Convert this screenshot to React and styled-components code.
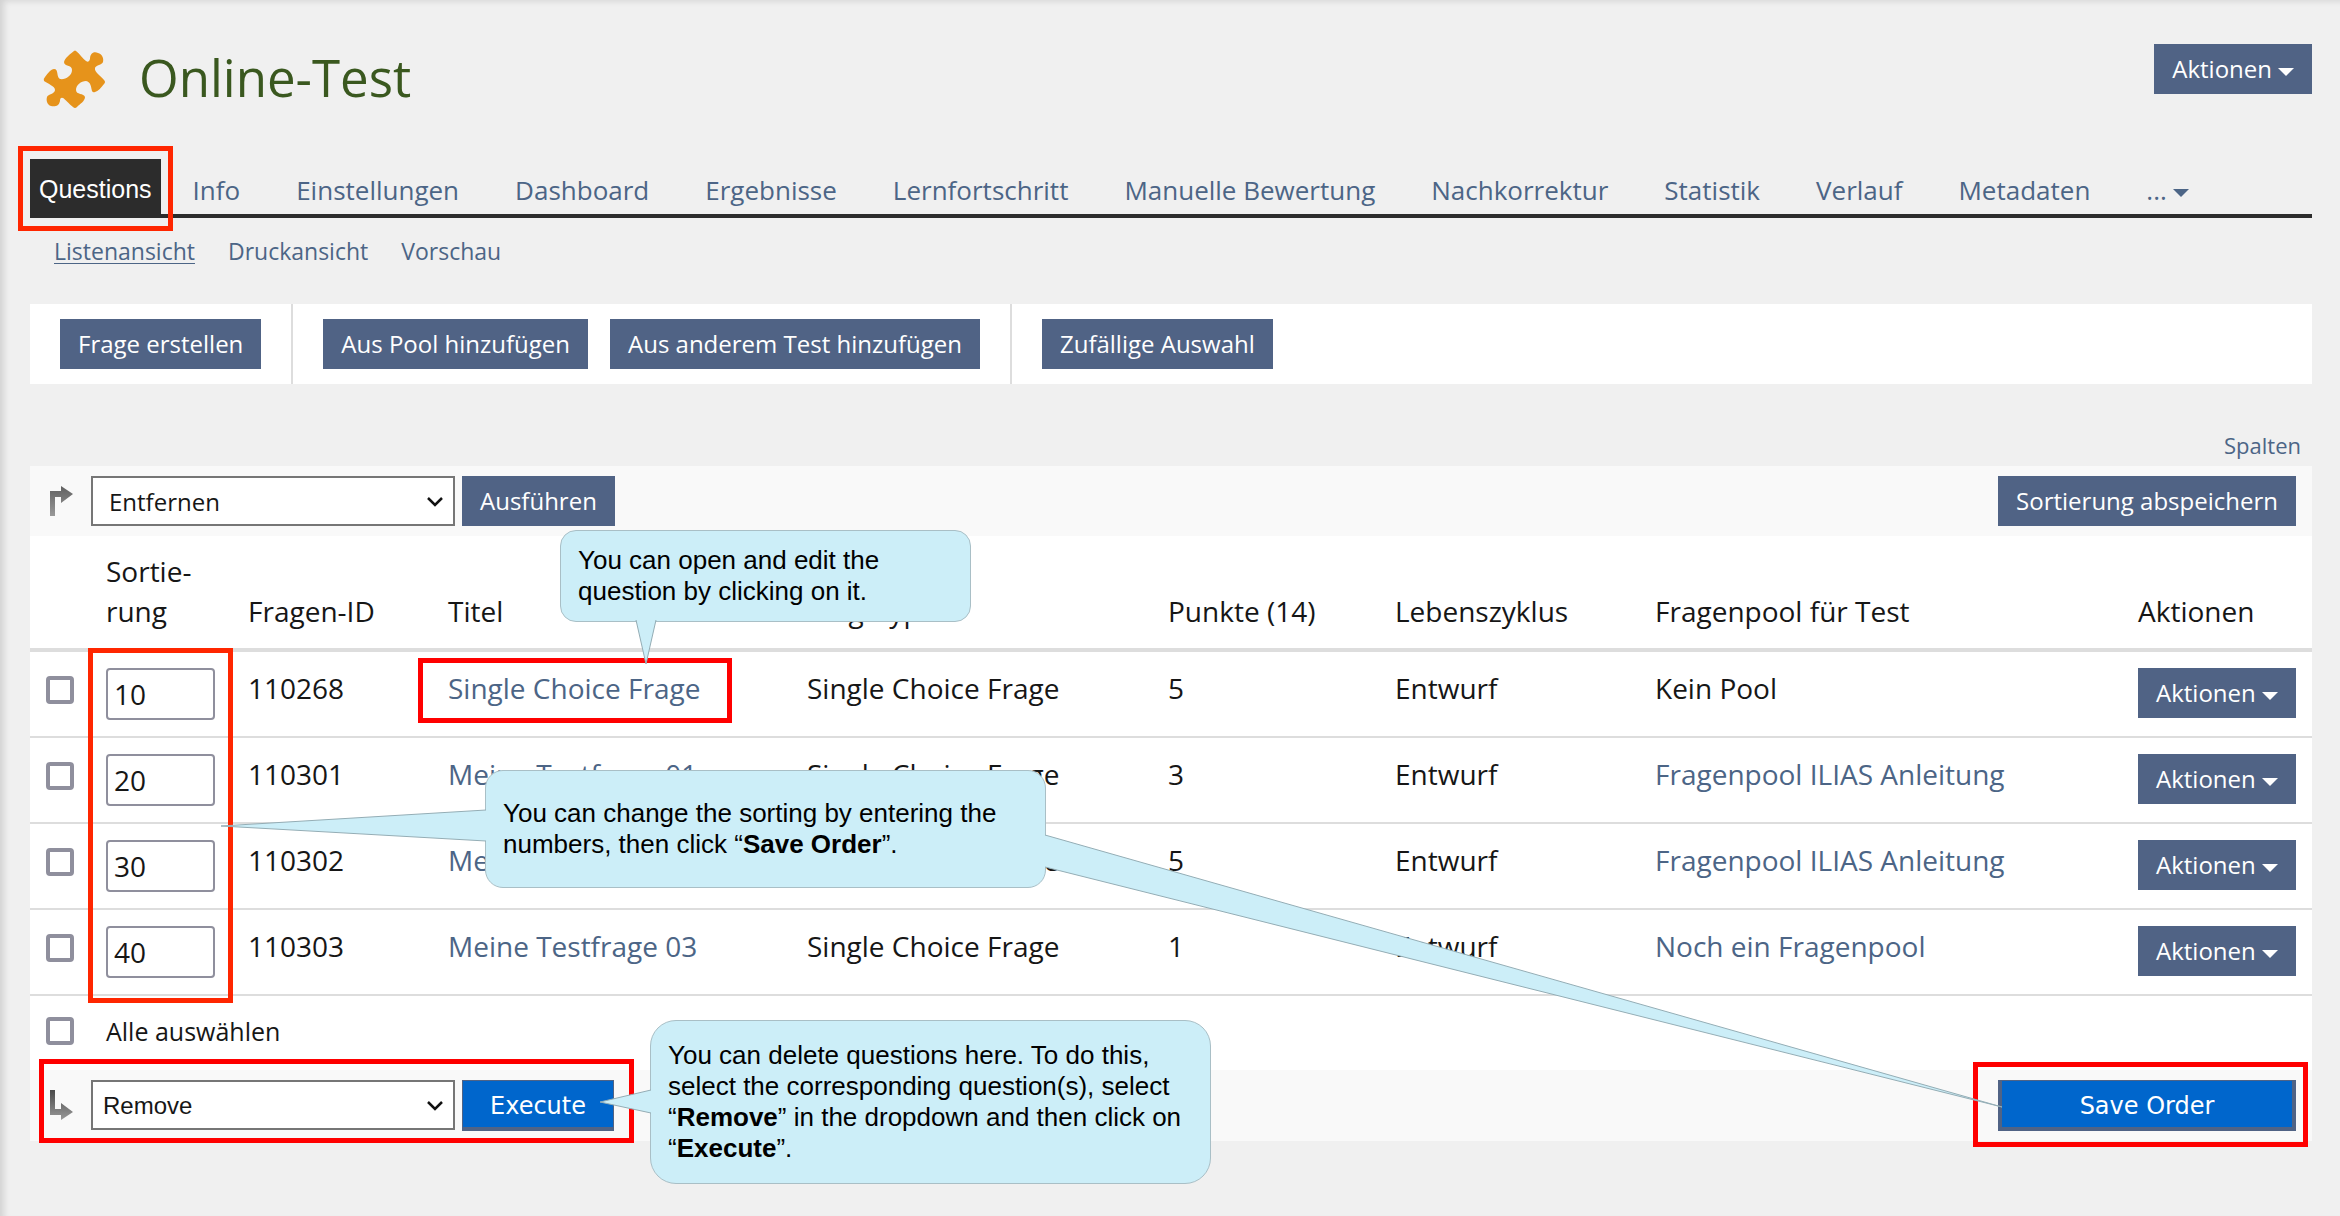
import React, { useState } from 'react';
import styled, { createGlobalStyle } from 'styled-components';

const GlobalStyle = createGlobalStyle`
    body {
        margin: 0;
        background: #f0f0f0;
        color: #161616;
        font-family: "Open Sans", sans-serif;
    }

    *, *::before, *::after {
        box-sizing: border-box;
    }
`;

const Page = styled.div`
    position: relative;
    min-height: 100vh;
    padding: 44px 28px 75px 30px;
    overflow: hidden;
    box-shadow: inset 6px 3px 6px -2px rgba(0, 0, 0, 0.12);
`;

const Header = styled.header`
    display: flex;
    align-items: flex-start;
    justify-content: space-between;
`;

const TitleGroup = styled.div`
    display: flex;
    align-items: center;
    gap: 32px;
    height: 72px;
    padding-left: 13px;
`;

const Title = styled.h1`
    margin: 0;
    padding-bottom: 6px;
    color: #3a581f;
    font-size: 51px;
    font-weight: 400;
    line-height: 66px;
`;

const Button = styled.button`
    display: inline-flex;
    align-items: center;
    gap: 6px;
    height: 50px;
    padding: 0 18px;
    border: 0;
    background: #506385;
    color: #fff;
    font-family: inherit;
    font-size: 24px;
    line-height: 36px;
    white-space: nowrap;
`;

const PrimaryButton = styled.button`
    width: ${({ $wide }) => ($wide ? '298px' : '152px')};
    height: 51px;
    padding: 3px 0 0;
    border: solid #506385;
    border-width: ${({ $wide }) => ($wide ? '1px 4px 4px' : '1px 1px 4px')};
    background: #0066cc;
    color: #fff;
    font-family: "DejaVu Sans", sans-serif;
    font-size: 24px;
`;

const Caret = styled.span`
    width: 0;
    height: 0;
    margin-top: 5px;
    border: 8px solid transparent;
    border-top: 8px solid currentColor;
    border-bottom: 0;
`;

const Tabs = styled.nav`
    display: flex;
    align-items: flex-end;
    margin-top: 43px;
    border-bottom: 4px solid #2c2c2c;
`;

const Tab = styled.a`
    display: flex;
    align-items: center;
    gap: 6px;
    margin-right: 56px;
    padding: 8px 0;
    color: #4c6586;
    font-size: 26px;
    line-height: 32px;
    text-decoration: none;
    white-space: nowrap;
`;

const ActiveTab = styled.a`
    position: relative;
    margin-right: 32px;
    padding: 14px 9px 9px;
    background: #2c2c2c;
    color: #fff;
    font-family: "Liberation Sans", Arial, sans-serif;
    font-size: 25px;
    line-height: 32px;
    text-decoration: none;
`;

const SubTabs = styled.nav`
    display: flex;
    gap: 33px;
    padding: 16px 24px 36px;
`;

const SubTab = styled.a`
    color: #4c6586;
    font-size: 23px;
    line-height: 34px;
    text-decoration: ${({ $active }) => ($active ? 'underline' : 'none')};
    text-decoration-thickness: 1px;
    text-underline-offset: 3px;
`;

const Toolbar = styled.div`
    display: flex;
    height: 80px;
    background: #fff;
`;

const ToolbarGroup = styled.div`
    display: flex;
    align-items: center;
    gap: 22px;
    padding: 0 30px;

    & + & {
        border-left: 2px solid #ddd;
    }
`;

const ColumnPicker = styled.div`
    display: flex;
    justify-content: flex-end;
    padding: 45px 11px 5px;

    a {
        color: #4c6586;
        font-size: 22px;
        line-height: 32px;
        text-decoration: none;
    }
`;

const CommandBar = styled.div`
    display: flex;
    align-items: flex-start;
    justify-content: space-between;
    padding: 10px 16px 10px 19px;
    background: #f9f9f9;
`;

const CommandGroup = styled.div`
    position: relative;
    display: flex;
    align-items: flex-start;
    gap: 7px;
`;

const ArrowBox = styled.div`
    width: 35px;
    padding-top: 10px;
`;

const SelectBox = styled.div`
    position: relative;
    display: flex;

    svg {
        position: absolute;
        top: 20px;
        right: 11px;
    }
`;

const Select = styled.select`
    width: 364px;
    height: 50px;
    padding: 0 ${({ $plain }) => ($plain ? '10px' : '16px')};
    appearance: none;
    border: 2px solid #767676;
    border-radius: 0;
    background: #fff;
    color: #161616;
    font-family: ${({ $plain }) => ($plain ? '"Liberation Sans", Arial, sans-serif' : 'inherit')};
    font-size: 24px;
`;

const Table = styled.table`
    width: 100%;
    table-layout: fixed;
    border-collapse: collapse;
    background: #fff;
    font-size: 28px;
    line-height: 40px;

    th, td {
        padding: 16px 15px;
        text-align: left;
        vertical-align: top;
        font-weight: 400;
        white-space: nowrap;
    }

    th {
        padding: 14px 15px 17px;
        vertical-align: bottom;
    }

    td {
        height: 86px;
    }

    thead tr {
        height: 114px;
        border-bottom: 4px solid #ddd;
    }

    tbody tr {
        border-bottom: 2px solid #ddd;
    }

    a {
        color: #4c6586;
        text-decoration: none;
    }
`;

const Checkbox = styled.input`
    display: block;
    width: 28px;
    height: 28px;
    margin: ${({ $row }) => ($row ? '8px 0 0 1px' : '0')};
    appearance: none;
    border: 4px solid #8f8f9d;
    border-radius: 4px;
    background: #fff;

    &:checked {
        background: #506385;
    }
`;

const OrderInput = styled.input`
    display: block;
    width: 109px;
    height: 52px;
    padding: 0 6px;
    border: 2px solid #8f8f9d;
    border-radius: 4px;
    color: #161616;
    font-family: inherit;
    font-size: 28px;
`;

const TitleLink = styled.a`
    position: relative;
`;

const SelectAll = styled.div`
    display: flex;
    align-items: center;
    gap: 32px;
    height: 74px;
    padding: 0 16px 4px;
    background: #fff;
    font-size: 25px;
`;

const TableArea = styled.div`
    position: relative;
`;

// red marker frame around the part a hint talks about
const Marker = styled.span`
    position: absolute;
    z-index: 1;
    inset: ${({ $inset }) => $inset};
    border: 5px solid ${({ $color }) => $color || '#ff0000'};
    pointer-events: none;
`;

const OrderMarker = styled(Marker)`
    left: 58px;
    width: 145px;
`;

const Pointers = styled.svg`
    position: absolute;
    z-index: 3;
    top: 0;
    left: 0;
    pointer-events: none;
`;

const Callout = styled.div`
    position: absolute;
    z-index: 2;
    top: ${({ $top }) => $top}px;
    left: ${({ $left }) => $left}px;
    width: ${({ $width }) => $width}px;
    padding: ${({ $padding }) => $padding};
    border: 1px solid #a9bfc6;
    border-radius: ${({ $radius }) => $radius}px;
    background: #cceef8;
    color: #000;
    font-family: "Liberation Sans", Arial, sans-serif;
    font-size: 26px;
    line-height: 31px;
    white-space: nowrap;
`;

const tabs = [
    'Info', 'Einstellungen', 'Dashboard', 'Ergebnisse', 'Lernfortschritt',
    'Manuelle Bewertung', 'Nachkorrektur', 'Statistik', 'Verlauf', 'Metadaten',
];

const columnWidths = [61, 142, 200, 359, 361, 227, 260, null, 189];

const initialQuestions = [
    { order: '10', id: 110268, title: 'Single Choice Frage', points: 5, pool: null },
    { order: '20', id: 110301, title: 'Meine Testfrage 01', points: 3, pool: 'Fragenpool ILIAS Anleitung' },
    { order: '30', id: 110302, title: 'Meine Testfrage 02', points: 5, pool: 'Fragenpool ILIAS Anleitung' },
    { order: '40', id: 110303, title: 'Meine Testfrage 03', points: 1, pool: 'Noch ein Fragenpool' },
];

const PuzzleIcon = () => (
    <svg width="64" height="60" viewBox="0 0 64 60" aria-hidden="true">
        <path
            fill="#e6931b"
            d="M31 1 Q32 0 33 1 C37 4 40 9 43 11 Q46 13 47 9 C47 3 51 1 55 3 C59 4 61 8 60 12 C59 15 53 15 52 18 C51 22 58 26 61 30 Q63 32 61 34 C58 38 55 41 52 42 Q50 43 49 41 C48 37 48 32 43 31 C38 31 33 35 33 40 C33 45 41 43 42 47 C42 51 37 54 34 57 Q32 59 30 57 C26 54 22 49 20 48 Q17 47 17 51 C16 56 12 57 8 56 C4 55 3 50 4 47 C5 44 12 44 12 40 C12 36 5 34 1 31 Q0 29 2 27 C5 23 8 19 11 19 C16 19 13 27 17 29 C22 30 29 26 29 20 C29 14 21 17 21 12 C22 8 27 4 31 1 Z"
        />
    </svg>
);

const ArrowIcon = ({ down }) => (
    <svg width="24" height="30" viewBox="0 0 24 30" aria-hidden="true">
        <defs>
            <linearGradient id={down ? 'arrowDown' : 'arrowUp'} x1="0" y1="0" x2="0" y2="1">
                <stop offset="0" stopColor={down ? '#4a4a4a' : '#606060'} />
                <stop offset="1" stopColor="#999" />
            </linearGradient>
        </defs>
        <path
            fill={`url(#${down ? 'arrowDown' : 'arrowUp'})`}
            d={down
                ? 'M1 0 H6 V19 H12 V13 L24 22 L12 30 V25 H1 Z'
                : 'M1 30 V5 H12 V0 L24 8 L12 17 V11 H6 V30 Z'}
        />
    </svg>
);

const ChevronIcon = () => (
    <svg width="18" height="12" viewBox="0 0 18 12" aria-hidden="true">
        <path d="M2 2 L9 9 L16 2" fill="none" stroke="#111" strokeWidth="2.5" />
    </svg>
);

const ActionButton = () => (
    <Button type="button">Aktionen<Caret /></Button>
);

const QuestionRow = ({ question, marked, onOrderChange }) => (
    <tr>
        <td><Checkbox $row type="checkbox" aria-label={`Frage ${question.id}`} /></td>
        <td>
            <OrderInput
                type="text"
                aria-label={`Sortierung ${question.id}`}
                value={question.order}
                onChange={(e) => onOrderChange(question.id, e.target.value)}
            />
        </td>
        <td>{question.id}</td>
        <td>
            <TitleLink href="#frage">
                {question.title}
                {marked && <Marker $inset="-11px -32px -16px -30px" />}
            </TitleLink>
        </td>
        <td>Single Choice Frage</td>
        <td>{question.points}</td>
        <td>Entwurf</td>
        <td>{question.pool ? <a href="#pool">{question.pool}</a> : 'Kein Pool'}</td>
        <td><ActionButton /></td>
    </tr>
);

const App = () => {
    const [questions, setQuestions] = useState(initialQuestions);

    const changeOrder = (id, order) => {
        setQuestions(questions.map((q) => (q.id === id ? { ...q, order } : q)));
    };

    return (
        <Page>
            <GlobalStyle />
            <Header>
                <TitleGroup>
                    <PuzzleIcon />
                    <Title>Online-Test</Title>
                </TitleGroup>
                <ActionButton />
            </Header>

            <Tabs>
                <ActiveTab href="#questions">
                    Questions
                    <Marker $inset="-13px -12px -17px" $color="#ff2600" />
                </ActiveTab>
                {tabs.map((tab) => <Tab key={tab} href="#tab">{tab}</Tab>)}
                <Tab href="#more">...<Caret /></Tab>
            </Tabs>
            <SubTabs>
                <SubTab $active href="#liste">Listenansicht</SubTab>
                <SubTab href="#druck">Druckansicht</SubTab>
                <SubTab href="#vorschau">Vorschau</SubTab>
            </SubTabs>

            <Toolbar>
                <ToolbarGroup>
                    <Button type="button">Frage erstellen</Button>
                </ToolbarGroup>
                <ToolbarGroup>
                    <Button type="button">Aus Pool hinzufügen</Button>
                    <Button type="button">Aus anderem Test hinzufügen</Button>
                </ToolbarGroup>
                <ToolbarGroup>
                    <Button type="button">Zufällige Auswahl</Button>
                </ToolbarGroup>
            </Toolbar>

            <ColumnPicker><a href="#spalten">Spalten</a></ColumnPicker>

            <CommandBar>
                <CommandGroup>
                    <ArrowBox><ArrowIcon /></ArrowBox>
                    <SelectBox>
                        <Select aria-label="Aktion oben">
                            <option>Entfernen</option>
                        </Select>
                        <ChevronIcon />
                    </SelectBox>
                    <Button type="button">Ausführen</Button>
                </CommandGroup>
                <Button type="button">Sortierung abspeichern</Button>
            </CommandBar>

            <TableArea>
                <Table>
                    <colgroup>
                        {columnWidths.map((width, i) => <col key={i} width={width || undefined} />)}
                    </colgroup>
                    <thead>
                        <tr>
                            <th aria-label="Auswahl" />
                            <th>Sortie-<br />rung</th>
                            <th>Fragen-ID</th>
                            <th>Titel</th>
                            <th>Fragetyp</th>
                            <th>Punkte (14)</th>
                            <th>Lebenszyklus</th>
                            <th>Fragenpool für Test</th>
                            <th>Aktionen</th>
                        </tr>
                    </thead>
                    <tbody>
                        {questions.map((question, i) => (
                            <QuestionRow
                                key={question.id}
                                question={question}
                                marked={i === 0}
                                onOrderChange={changeOrder}
                            />
                        ))}
                    </tbody>
                </Table>
                <OrderMarker $inset="112px auto -7px" $color="#ff2600" />
            </TableArea>
            <SelectAll>
                <Checkbox type="checkbox" id="select-all" />
                <label htmlFor="select-all">Alle auswählen</label>
            </SelectAll>

            <CommandBar>
                <CommandGroup>
                    <ArrowBox><ArrowIcon down /></ArrowBox>
                    <SelectBox>
                        <Select $plain aria-label="Aktion unten">
                            <option>Remove</option>
                        </Select>
                        <ChevronIcon />
                    </SelectBox>
                    <PrimaryButton type="button">Execute</PrimaryButton>
                    <Marker $inset="-21px -20px -12px -10px" />
                </CommandGroup>
                <CommandGroup>
                    <PrimaryButton $wide type="button">Save Order</PrimaryButton>
                    <Marker $inset="-18px -12px -16px -25px" />
                </CommandGroup>
            </CommandBar>

            <Callout $top={530} $left={560} $width={411} $radius={16} $padding="14px 17px">
                You can open and edit the<br />
                question by clicking on it.
            </Callout>
            <Callout $top={770} $left={485} $width={561} $radius={18} $padding="27px 17px">
                You can change the sorting by entering the<br />
                numbers, then click “<b>Save Order</b>”.
            </Callout>
            <Callout $top={1020} $left={650} $width={561} $radius={26} $padding="19px 17px">
                You can delete questions here. To do this,<br />
                select the corresponding question(s), select<br />
                “<b>Remove</b>” in the dropdown and then click on<br />
                “<b>Execute</b>”.
            </Callout>
            <Pointers width="2010" height="1120" fill="#cceef8" stroke="#94adb5" aria-hidden="true">
                <path d="M636 620 L646 664 L656 620" />
                <path d="M486 810 L221 826 L486 841" />
                <path d="M1045 835 L2002 1107 L1045 867" />
                <path d="M651 1090 L600 1102 L651 1113" />
            </Pointers>
        </Page>
    );
};

export default App;
